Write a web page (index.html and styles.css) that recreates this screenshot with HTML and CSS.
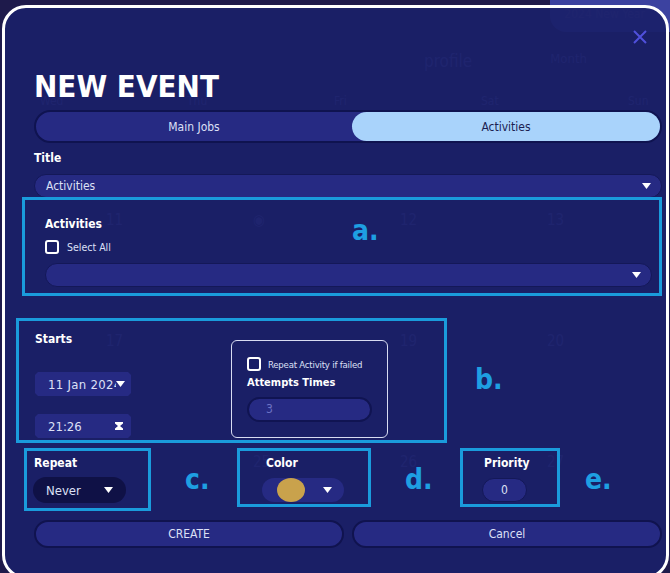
FILE: index.html
```html
<!DOCTYPE html>
<html lang="en">
<head>
  <meta charset="UTF-8" />
  <meta name="viewport" content="width=device-width, initial-scale=1.0" />
  <title>New Event</title>
  <link rel="stylesheet" href="styles.css">
</head>
<body>
  <!-- calendar page behind the dialog -->
  <div class="calendar">
    <div class="cal-head">
      <span class="cal-profile">profile</span>
      <span class="cal-month">Month</span>
      <span class="cal-pill">2024 New Year</span>
    </div>
    <div class="cal-row cal-days">
      <span>Wed</span><span>Thu</span><span>Fri</span><span>Sat</span><span>Sun</span>
    </div>
    <div class="cal-row cal-week">
      <span>11</span><span>&#9673;</span><span>12</span><span>13</span><span></span>
    </div>
    <div class="cal-row cal-week">
      <span>17</span><span></span><span>19</span><span>20</span><span></span>
    </div>
    <div class="cal-row cal-week">
      <span></span><span>25</span><span>26</span><span>27</span><span></span>
    </div>
  </div>

  <div class="modal">
    <button class="close-btn">
      <svg width="14" height="14" viewBox="0 0 14 14"><path d="M1 1L13 13M13 1L1 13" stroke="currentColor" stroke-width="2" /></svg>
    </button>

    <h1>NEW EVENT</h1>

    <div class="tabs">
      <div class="tab">Main Jobs</div>
      <div class="tab active">Activities</div>
    </div>

    <div class="field-label title-label">Title</div>
    <div class="select">
      <span>Activities</span>
      <svg class="caret" width="9" height="6" viewBox="0 0 9 6"><path d="M0 0H9L4.5 6Z" fill="#fff" /></svg>
    </div>

    <div class="note note-a">
      <span class="mark mark-a">a.</span>
      <div class="field-label">Activities</div>
      <label class="check-row">
        <span class="checkbox"></span>
        <span>Select All</span>
      </label>
      <div class="select select-activities">
        <span></span>
        <svg class="caret" width="9" height="6" viewBox="0 0 9 6"><path d="M0 0H9L4.5 6Z" fill="#fff" /></svg>
      </div>
    </div>

    <div class="note-line">
      <div class="note note-b">
        <div class="starts">
          <div class="field-label">Starts</div>
          <div class="chip chip-date">
            <span class="chip-text">11 Jan 2024</span>
            <svg class="caret" width="9" height="6" viewBox="0 0 9 6"><path d="M0 0H9L4.5 6Z" fill="#fff" /></svg>
          </div>
          <div class="chip chip-time">
            <span class="chip-text">21:26</span>
            <svg class="hourglass" width="8" height="8" viewBox="0 0 8 8"><path d="M0 0H8V1.6L5 4L8 6.4V8H0V6.4L3 4L0 1.6Z" fill="#fff" /></svg>
          </div>
        </div>
        <div class="retry-box">
          <label class="check-row">
            <span class="checkbox"></span>
            <span class="retry-text">Repeat Activity if failed</span>
          </label>
          <div class="field-label attempts-label">Attempts Times</div>
          <div class="attempts-input">3</div>
        </div>
      </div>
      <span class="mark mark-b">b.</span>
    </div>

    <div class="note-line options">
      <div class="note note-c">
        <div class="field-label">Repeat</div>
        <div class="pill pill-dark">
          <span>Never</span>
          <svg class="caret" width="9" height="6" viewBox="0 0 9 6"><path d="M0 0H9L4.5 6Z" fill="#fff" /></svg>
        </div>
      </div>
      <span class="mark mark-c">c.</span>
      <div class="note note-d">
        <div class="field-label">Color</div>
        <div class="pill pill-color">
          <span class="swatch"></span>
          <svg class="caret" width="9" height="6" viewBox="0 0 9 6"><path d="M0 0H9L4.5 6Z" fill="#fff" /></svg>
        </div>
      </div>
      <span class="mark mark-d">d.</span>
      <div class="note note-e">
        <div class="field-label">Priority</div>
        <div class="pill pill-priority">0</div>
      </div>
      <span class="mark mark-e">e.</span>
    </div>

    <div class="actions">
      <button class="action-btn">CREATE</button>
      <button class="action-btn">Cancel</button>
    </div>
  </div>
</body>
</html>
```

FILE: styles.css
```css
body {
  margin: 0;
  height: 573px;
  overflow: hidden;
  position: relative;
  background-color: #1e1a4b;
  font-family: "DejaVu Sans Condensed", sans-serif;
  color: #dde0f6;
}

/* page behind the dialog, seen faintly through it */
.calendar {
  color: #5a60b4;
  font-family: "DejaVu Sans Condensed", sans-serif;
}

.cal-head {
  display: flex;
  height: 88px;
  align-items: flex-end;
}

.cal-profile {
  margin-left: 424px;
  font-size: 17px;
  padding-bottom: 17px;
}

.cal-month {
  width: 0;
  margin-left: 78px;
  white-space: nowrap;
  font-size: 13px;
  padding-bottom: 22px;
}

.cal-pill {
  flex: none;
  align-self: flex-start;
  margin-left: auto;
  width: 112px;
  height: 32px;
  padding-left: 14px;
  overflow: hidden;
  white-space: nowrap;
  border-radius: 0 0 0 16px;
  background-color: #3c42a0;
  font-size: 12px;
  line-height: 28px;
}

.cal-row {
  display: grid;
  grid-template-columns: repeat(5, 147px);
  padding-left: 40px;
  font-size: 12px;
}

.cal-days {
  height: 20px;
  align-items: end;
}

.cal-week {
  height: 121px;
  align-items: end;
  font-size: 15px;
}

.cal-week span {
  padding-left: 66px;
}

/* dialog */
.modal {
  position: absolute;
  left: 2px;
  top: 5px;
  width: 667px;
  height: 574px;
  box-sizing: border-box;
  padding: 60px 4px 0 29px;
  border: 3px solid #ffffff;
  border-radius: 24px;
  background-color: rgba(26, 31, 104, 0.92);
}

.close-btn {
  position: absolute;
  top: 22px;
  right: 19px;
  padding: 0;
  border: none;
  background: none;
  color: #5050dc;
  cursor: pointer;
}

.modal h1 {
  margin: 0;
  font-size: 31px;
  line-height: 36px;
  font-weight: bold;
  color: #ffffff;
}

.tabs {
  display: flex;
  height: 33px;
  margin-top: 6px;
  box-sizing: border-box;
  border: 2px solid #0f1350;
  border-radius: 17px;
  background-color: #262a83;
}

.tab {
  width: 316px;
  display: flex;
  align-items: center;
  justify-content: center;
  font-size: 12px;
}

.tab.active {
  flex: 1;
  border-radius: 15px;
  background-color: #a9d3fb;
  color: #1b1e52;
}

.field-label {
  font-weight: bold;
  font-size: 12px;
  line-height: 16px;
  color: #ffffff;
}

.title-label {
  margin-top: 7px;
}

.select {
  height: 24px;
  margin-top: 8px;
  box-sizing: border-box;
  padding: 0 10px 0 11px;
  display: flex;
  align-items: center;
  justify-content: space-between;
  border: 1px solid #141858;
  border-radius: 12px;
  background-color: #262a83;
  font-size: 12px;
}

/* blue annotation frames */
.note {
  border: 3px solid #1a9bdc;
  box-sizing: border-box;
}

.mark {
  font-weight: bold;
  font-size: 28px;
  line-height: 30px;
  color: #1e9fe2;
}

.note-a {
  position: relative;
  margin: -1px 0 0 -12px;
  padding: 16px 7px 6px 20px;
}

.mark-a {
  position: absolute;
  left: 327px;
  top: 16px;
}

.check-row {
  display: flex;
  align-items: center;
  gap: 8px;
  margin-top: 8px;
  font-size: 10.5px;
}

.checkbox {
  flex: none;
  width: 14px;
  height: 14px;
  box-sizing: border-box;
  border: 2px solid #ffffff;
  border-radius: 3px;
}

.select-activities {
  margin-top: 9px;
}

.note-line {
  display: flex;
  align-items: center;
}

.note-b {
  width: 431px;
  margin: 22px 0 0 -18px;
  padding: 10px 0 2px 16px;
  display: flex;
  align-items: flex-start;
}

.mark-b {
  margin: 20px 0 0 28px;
}

.starts {
  width: 196px;
}

.chip {
  width: 96px;
  height: 24px;
  box-sizing: border-box;
  display: flex;
  align-items: center;
  padding: 0 6px 0 13px;
  background-color: #262a83;
  clip-path: polygon(3px 0, calc(100% - 3px) 0, 100% 3px, 100% calc(100% - 3px), calc(100% - 3px) 100%, 3px 100%, 0 calc(100% - 3px), 0 3px);
  font-size: 13px;
}

.chip-date {
  margin-top: 25px;
}

.chip-time {
  margin-top: 18px;
}

.chip-text {
  flex: 1;
  overflow: hidden;
  white-space: nowrap;
}

.chip-date .chip-text {
  letter-spacing: 0.3px;
}

.hourglass {
  margin-right: 2px;
}

.retry-box {
  width: 157px;
  height: 98px;
  margin-top: 9px;
  box-sizing: border-box;
  padding: 16px 12px 0 15px;
  border: 1px solid #d8dcf2;
  border-radius: 6px;
}

.retry-box .check-row {
  margin-top: 0;
  gap: 7px;
}

.retry-text {
  font-size: 9.5px;
  letter-spacing: -0.2px;
  white-space: nowrap;
}

.attempts-label {
  margin-top: 4px;
  font-size: 11px;
}

.attempts-input {
  width: 125px;
  height: 25px;
  margin-top: 6px;
  box-sizing: border-box;
  padding-left: 17px;
  border: 2px solid #101452;
  border-radius: 13px;
  background-color: #262a83;
  color: #6c72c4;
  font-size: 12px;
  line-height: 21px;
}

.options {
  margin-top: 5px;
  align-items: flex-start;
}

.options .mark {
  width: 26px;
  margin-top: 17px;
}

.note-c {
  width: 127px;
  height: 63px;
  margin-left: -10px;
  padding: 4px 0 0 6px;
}

.note-c .field-label {
  padding-left: 1px;
}

.pill {
  height: 24px;
  margin-top: 7px;
  box-sizing: border-box;
  display: flex;
  align-items: center;
  border-radius: 12px;
  background-color: #262a83;
  font-size: 12px;
}

.pill-dark {
  width: 93px;
  height: 26px;
  margin-top: 6px;
  padding: 0 13px 0 13px;
  justify-content: space-between;
  background-color: #0f1146;
  border-radius: 13px;
  font-size: 13px;
}

.mark-c {
  margin-left: 34px;
}

.note-d {
  width: 134px;
  height: 59px;
  margin-left: 26px;
  padding: 4px 0 0 26px;
}

.pill-color {
  width: 82px;
  margin-left: -4px;
  padding: 0 12px 0 15px;
  justify-content: space-between;
}

.swatch {
  width: 28px;
  height: 24px;
  border-radius: 50%;
  background-color: #c9a24c;
}

.mark-d {
  margin-left: 34px;
}

.note-e {
  width: 100px;
  height: 59px;
  margin-left: 29px;
  padding: 4px 0 0 21px;
}

.pill-priority {
  width: 45px;
  margin-left: -2px;
  justify-content: center;
  border: 1px solid #141858;
}

.mark-e {
  margin-left: 25px;
}

.actions {
  display: flex;
  gap: 8px;
  margin-top: 9px;
}

.action-btn {
  flex: 1;
  height: 28px;
  padding: 0;
  border: 2px solid #10134f;
  border-radius: 14px;
  background-color: #262a83;
  color: #dde0f6;
  font-family: "DejaVu Sans Condensed", sans-serif;
  font-size: 12px;
  cursor: pointer;
}
```
